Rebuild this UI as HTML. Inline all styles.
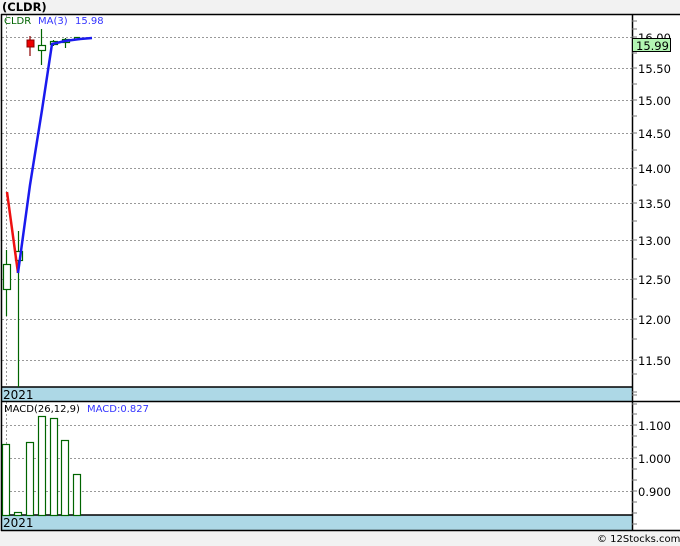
<!DOCTYPE html>
<html><head><meta charset="utf-8"><style>
html,body{margin:0;padding:0;background:#f2f2f2;width:680px;height:546px;overflow:hidden}
svg{display:block}
text{font-family:"DejaVu Sans","Liberation Sans",sans-serif}
</style></head><body>
<svg width="680" height="546" viewBox="0 0 680 546" xmlns="http://www.w3.org/2000/svg">
<rect x="0" y="0" width="680" height="546" fill="#f2f2f2"/>
<text x="2" y="11" font-size="11.5" font-weight="bold" fill="#000">(CLDR)</text>
<rect x="1" y="14" width="679" height="517" fill="#fff"/>
<g stroke="#999" stroke-width="1" stroke-dasharray="2,2">
<line x1="2" y1="37.5" x2="632" y2="37.5"/><line x1="2" y1="68.5" x2="632" y2="68.5"/>
<line x1="2" y1="100.5" x2="632" y2="100.5"/><line x1="2" y1="133.5" x2="632" y2="133.5"/>
<line x1="2" y1="168.5" x2="632" y2="168.5"/><line x1="2" y1="203.5" x2="632" y2="203.5"/>
<line x1="2" y1="240.5" x2="632" y2="240.5"/><line x1="2" y1="279.5" x2="632" y2="279.5"/>
<line x1="2" y1="319.5" x2="632" y2="319.5"/><line x1="2" y1="360.5" x2="632" y2="360.5"/>
<line x1="2" y1="425.5" x2="632" y2="425.5"/><line x1="2" y1="458.5" x2="632" y2="458.5"/>
<line x1="2" y1="491.5" x2="632" y2="491.5"/>
<line x1="6.5" y1="15" x2="6.5" y2="387"/><line x1="6.5" y1="402" x2="6.5" y2="515"/>
</g>
<rect x="1" y="387" width="631" height="14" fill="#add8e6"/>
<rect x="1" y="515" width="631" height="16" fill="#add8e6"/>
<g stroke="#000" stroke-width="1.5" fill="none">
<line x1="1" y1="14.5" x2="680" y2="14.5"/>
<line x1="1.5" y1="14" x2="1.5" y2="531"/>
<line x1="632.5" y1="14" x2="632.5" y2="531"/>
<line x1="1" y1="387" x2="632" y2="387"/>
<line x1="1" y1="401.5" x2="680" y2="401.5"/>
<line x1="1" y1="515" x2="632" y2="515"/>
<line x1="1" y1="530.5" x2="680" y2="530.5"/>
</g>
<g stroke="#777" stroke-width="1">
<path d="M632 21h5M632 29h5M632 37h5M632 53h5M632 68h5M632 84h5M632 100h5M632 116h5M632 133h5M632 150h5M632 168h5M632 185h5M632 203h5M632 221h5M632 240h5M632 259h5M632 279h5M632 299h5M632 319h5M632 339h5M632 360h5M632 374h5M632 392h5M632 395h5M632 404h5M632 414h5M632 425h5M632 436h5M632 447h5M632 458h5M632 469h5M632 480h5M632 491h5M632 502h5M632 513h5M632 524h5"/>
</g>
<g font-size="11.5" fill="#000">
<text x="638" y="42">16.00</text><text x="638" y="73">15.50</text><text x="638" y="105">15.00</text>
<text x="638" y="138">14.50</text><text x="638" y="173">14.00</text><text x="638" y="208">13.50</text>
<text x="638" y="245">13.00</text><text x="638" y="284">12.50</text><text x="638" y="324">12.00</text>
<text x="638" y="365">11.50</text>
<text x="638" y="430">1.100</text><text x="638" y="463">1.000</text><text x="638" y="496">0.900</text>
</g>
<rect x="632.5" y="38.5" width="38" height="13" fill="#b3f5b3" stroke="#000"/>
<text x="636" y="50" font-size="11.5" fill="#000">15.99</text>
<text x="4" y="24" font-size="10" fill="#006400">CLDR</text>
<text x="38" y="24" font-size="10" fill="#3333ff">MA(3)</text>
<text x="75" y="24" font-size="10" fill="#3333ff">15.98</text>
<text x="3" y="399" font-size="12" fill="#000">2021</text>
<text x="3" y="527" font-size="12" fill="#000">2021</text>
<text x="4" y="412" font-size="10" fill="#000">MACD(26,12,9)</text>
<text x="87" y="412" font-size="10" fill="#3333ff">MACD:0.827</text>
<text x="597" y="542" font-size="10" fill="#000">© 12Stocks.com</text>
<g stroke="#006400" stroke-width="1.2" fill="#fff">
<line x1="6.5" y1="250" x2="6.5" y2="316"/><rect x="3.5" y="264.5" width="7" height="25"/>
<line x1="18.5" y1="231" x2="18.5" y2="387"/><rect x="15.5" y="251.5" width="7" height="9"/>
<line x1="41.5" y1="29" x2="41.5" y2="65"/><rect x="38.5" y="45.5" width="7" height="5"/>
<line x1="53.5" y1="40" x2="53.5" y2="46"/><rect x="50.5" y="41.5" width="7" height="3"/>
<line x1="65.5" y1="38" x2="65.5" y2="48"/><rect x="62.5" y="39.5" width="7" height="3"/>
<rect x="74.5" y="37.5" width="5" height="2"/>
</g>
<line x1="30" y1="36" x2="30" y2="56" stroke="#8b0000" stroke-width="1.2"/>
<rect x="27" y="40" width="7" height="7" fill="#ee0000" stroke="#8b0000"/>
<polyline points="7,192 18,273" stroke="#ee1111" stroke-width="2.5" fill="none"/>
<polyline points="18,273 30,185 42,110 52,44 65,41 80,39 92,38" stroke="#1a1aee" stroke-width="2.5" fill="none"/>
<g stroke="#006400" stroke-width="1.2" fill="#fff">
<rect x="2.5" y="444.5" width="7" height="71"/>
<rect x="14.5" y="512.5" width="7" height="3"/>
<rect x="26.5" y="442.5" width="7" height="73"/>
<rect x="38.5" y="416.5" width="7" height="99"/>
<rect x="50.5" y="418.5" width="7" height="97"/>
<rect x="61.5" y="440.5" width="7" height="75"/>
<rect x="73.5" y="474.5" width="7" height="41"/>
</g>
</svg>
</body></html>
